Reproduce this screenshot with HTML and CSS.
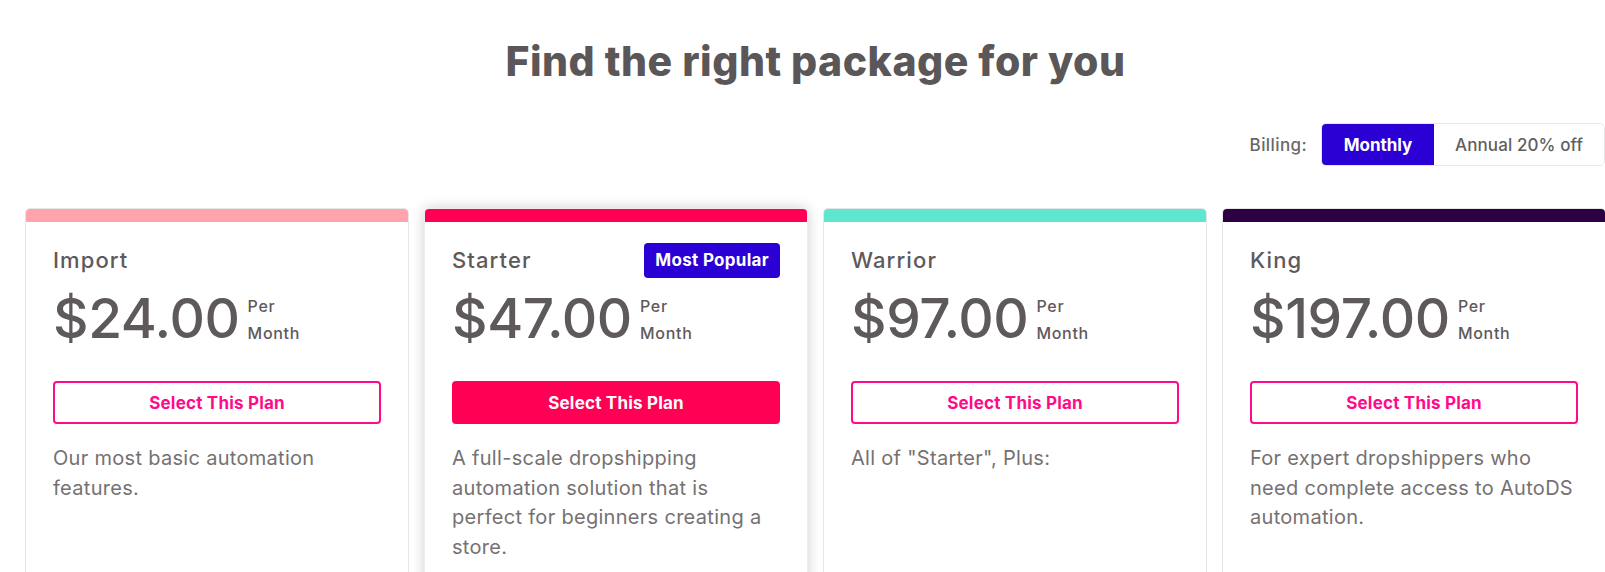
FILE: index.html
```html
<!DOCTYPE html>
<html lang="en">
<head>
<meta charset="utf-8">
<title>Pricing</title>
<link rel="stylesheet" href="styles.css">
</head>
<body>
<main class="page">
  <h1 class="title">Find the right package for you</h1>
  <div class="billing">
    <span class="billing-label">Billing:</span>
    <div class="toggle">
      <button class="toggle-opt active">Monthly</button>
      <button class="toggle-opt annual">Annual 20% off</button>
    </div>
  </div>
  <div class="plans">
    <section class="card import">
      <div class="bar"></div>
      <div class="body">
        <div class="head"><h2 class="name">Import</h2></div>
        <div class="price-row"><span class="price">$24.00</span><span class="per">Per<br>Month</span></div>
        <button class="select">Select This Plan</button>
        <p class="desc">Our most basic automation features.</p>
      </div>
    </section>
    <section class="card starter">
      <div class="bar"></div>
      <div class="body">
        <div class="head"><h2 class="name">Starter</h2><span class="badge">Most Popular</span></div>
        <div class="price-row"><span class="price">$47.00</span><span class="per">Per<br>Month</span></div>
        <button class="select filled">Select This Plan</button>
        <p class="desc">A full-scale dropshipping automation solution that is perfect for beginners creating a store.</p>
      </div>
    </section>
    <section class="card warrior">
      <div class="bar"></div>
      <div class="body">
        <div class="head"><h2 class="name">Warrior</h2></div>
        <div class="price-row"><span class="price">$97.00</span><span class="per">Per<br>Month</span></div>
        <button class="select">Select This Plan</button>
        <p class="desc">All of "Starter", Plus:</p>
      </div>
    </section>
    <section class="card king">
      <div class="bar"></div>
      <div class="body">
        <div class="head"><h2 class="name">King</h2></div>
        <div class="price-row"><span class="price">$197.00</span><span class="per">Per<br>Month</span></div>
        <button class="select">Select This Plan</button>
        <p class="desc">For expert dropshippers who need complete access to AutoDS automation.</p>
      </div>
    </section>
  </div>
</main>
</body>
</html>
```
FILE: styles.css
```css
html, body {
  margin: 0;
  padding: 0;
  background: #ffffff;
  overflow: hidden;
}
body {
  font-family: Inter, "Noto Sans", "Liberation Sans", sans-serif;
  color: #5e595a;
  width: 1605px;
  height: 572px;
}
.page {
  width: 1581px;
  padding-left: 25px;
}
.title {
  margin: 36px 0 0;
  text-align: center;
  font-size: 41px;
  line-height: 50px;
  font-weight: 800;
  letter-spacing: 0.5px;
  color: #5b5657;
}
.billing {
  margin-top: 37px;
  display: flex;
  justify-content: flex-end;
  align-items: center;
  gap: 14px;
  padding-right: 1px;
}
.billing-label {
  font-size: 17px;
  font-weight: 500;
  letter-spacing: 0.4px;
  color: #6a6667;
}
.toggle {
  display: flex;
  height: 43px;
  border: 1px solid #e7e7e7;
  border-radius: 5px;
  box-sizing: border-box;
  overflow: hidden;
}
.toggle-opt {
  border: 0;
  background: #fff;
  font-family: inherit;
  font-size: 17px;
  font-weight: 500;
  color: #625e5f;
  padding: 0;
  margin: 0;
  text-align: center;
  cursor: pointer;
}
.toggle-opt.active {
  background: #2a00d5;
  color: #ffffff;
  font-weight: 700;
  width: 112px;
}
.toggle-opt.annual {
  width: 170px;
  letter-spacing: 0.1px;
}
.plans {
  margin-top: 42px;
  display: grid;
  grid-template-columns: repeat(4, 384px);
  column-gap: 15px;
}
.card {
  background: #fff;
  border: 1px solid #e6e6e6;
  border-radius: 5px;
  box-sizing: border-box;
  min-height: 420px;
  overflow: hidden;
}
.card.starter {
  border-color: #ececec;
  box-shadow: 0 0 14px rgba(0, 0, 0, 0.18);
}
.bar {
  height: 13px;
}
.import .bar { background: #ffa3ad; }
.starter .bar { background: #ff0054; }
.warrior .bar { background: #5fe6d0; }
.king .bar { background: #2d0044; }
.body {
  padding: 21px 27px 0 27px;
}
.head {
  display: flex;
  justify-content: space-between;
  align-items: center;
  min-height: 35px;
}
.name {
  margin: 0;
  font-size: 22px;
  font-weight: 500;
  line-height: 27px;
  letter-spacing: 1.1px;
  color: #5e595a;
}
.badge {
  background: #2a00d5;
  color: #fff;
  font-size: 17px;
  font-weight: 700;
  letter-spacing: 0.3px;
  line-height: 35px;
  padding: 0 11px;
  border-radius: 4px;
}
.price-row {
  margin-top: 13px;
  display: flex;
  align-items: flex-end;
  gap: 8px;
}
.price {
  font-size: 55px;
  line-height: 55px;
  font-weight: 500;
  color: #5e595a;
  letter-spacing: -0.4px;
}
.per {
  font-size: 16px;
  line-height: 26.5px;
  font-weight: 500;
  letter-spacing: 0.7px;
  color: #5e595a;
}
.select {
  display: block;
  width: 100%;
  height: 43px;
  margin-top: 35px;
  border: 2px solid #ff0a8a;
  border-radius: 4px;
  background: #fff;
  color: #ff0a8a;
  font-family: inherit;
  font-size: 17px;
  font-weight: 700;
  letter-spacing: 0.2px;
  cursor: pointer;
}
.select.filled {
  background: #ff0055;
  border-color: #ff0055;
  color: #fff;
}
.desc {
  margin: 20px 0 0;
  font-size: 20px;
  line-height: 29.5px;
  font-weight: 400;
  letter-spacing: 0.3px;
  color: #757172;
}
```
